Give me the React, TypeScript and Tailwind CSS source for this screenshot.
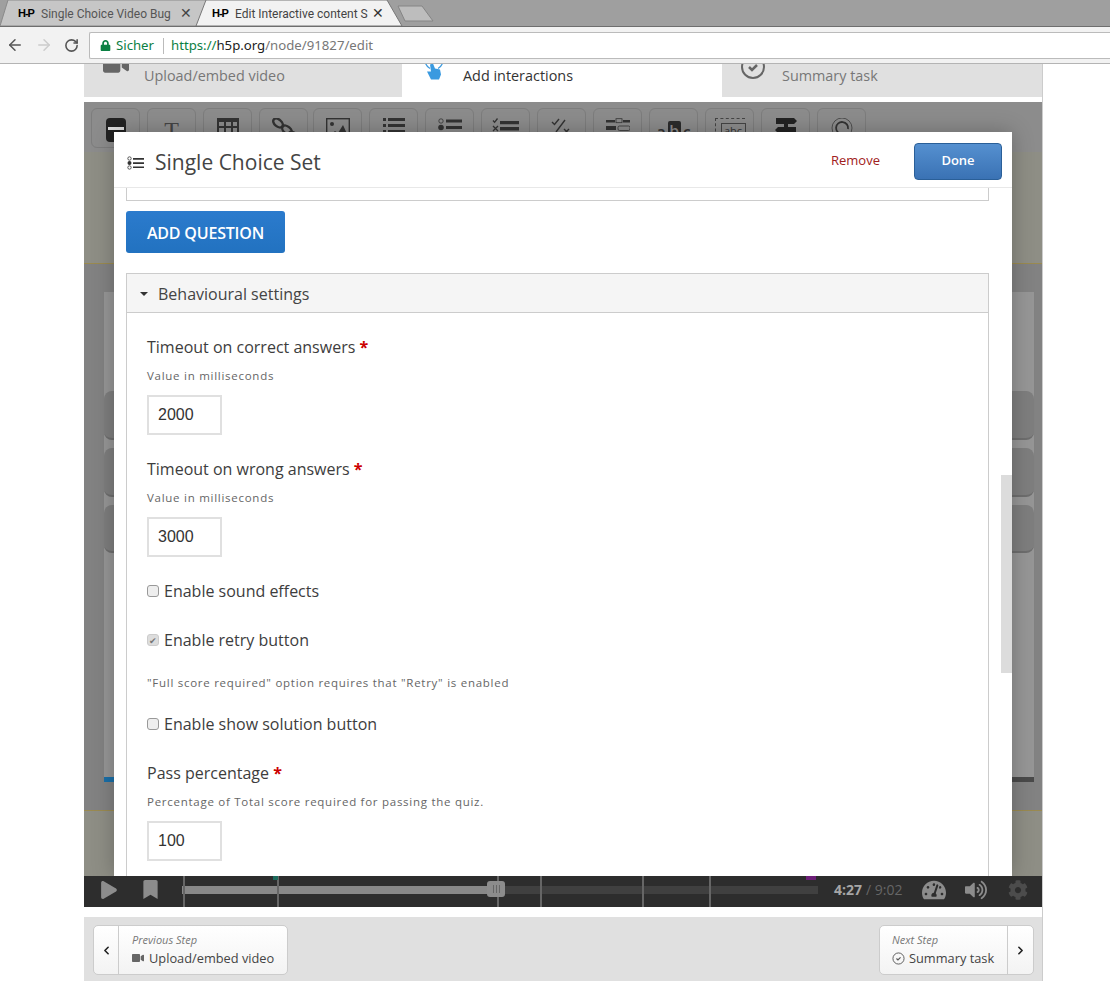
import { ArrowLeft, ArrowRight, RotateCw, ChevronLeft, ChevronRight } from 'lucide-react';
import { FaBookmark, FaCog, FaLock, FaPlay, FaTachometerAlt, FaVideo, FaVolumeUp } from 'react-icons/fa';

const Logo = () => (
  <span className="w-[17px] text-[11px] font-black tracking-[-1px] text-black font-['Liberation_Sans',sans-serif]">H-P</span>
);

function BrowserChrome() {
  return (
    <div className="shrink-0 font-['Noto_Sans',sans-serif]">
      {/* tabs */}
      <div className="relative flex h-[27px] items-center border-b border-[#6e6e6e] bg-[#9f9f9f] pt-[1px] font-['Roboto',sans-serif] text-[12px]">
        <svg className="absolute inset-0" width="440" height="26" viewBox="0 0 440 26">
          <path d="M0 26 L8 0 H208 L198 26 Z" fill="#c6c6c6" stroke="#8a8a8a" />
          <path d="M196 26 L206 0 H387 L402 26 Z" fill="#f2f2f2" stroke="#777" />
          <path d="M398 6 H422 L433 21 H405 Z" fill="#bdbdbd" stroke="#858585" />
        </svg>
        <div className="relative flex items-center pl-[18px]">
          <Logo />
          <span className="ml-[6px] w-[133px] whitespace-nowrap text-[#555]">Single Choice Video Bug</span>
          <span className="ml-[6px] w-[12px] text-center text-[14px] text-[#444]">✕</span>
          <span className="ml-[20px] flex"><Logo /></span>
          <span className="ml-[6px] w-[137px] whitespace-nowrap text-[#444]">Edit Interactive content S</span>
          <span className="w-[12px] text-center text-[14px] text-[#333]">✕</span>
        </div>
      </div>
      {/* toolbar */}
      <div className="flex h-[37px] items-center border-b border-[#b4b4b4] bg-[#f2f2f2]">
        <div className="flex w-[89px] items-center gap-[11px] pl-[6px]">
          <ArrowLeft size={18} strokeWidth={2} className="text-[#555]" />
          <ArrowRight size={18} strokeWidth={2} className="text-[#ccc]" />
          <RotateCw size={15} strokeWidth={2.5} className="text-[#555]" />
        </div>
        <div className="flex h-[27px] flex-1 items-center rounded-l-[2px] border border-r-0 border-[#bbb] bg-white pl-[10px] pt-[1px] text-[13.2px]">
          <FaLock size={11} className="text-[#0b8043]" />
          <span className="ml-[5px] text-[#0b8043]">Sicher</span>
          <span className="ml-[9px] h-[16px] w-px bg-[#bbb]" />
          <span className="ml-[7px] text-[#0b8043]">https://</span>
          <span className="text-[#222]">h5p.org</span>
          <span className="text-[#777]">/node/91827/edit</span>
        </div>
      </div>
    </div>
  );
}

const toolIcons = [
  <svg key="0" viewBox="0 0 24 24" className="h-[24px] w-[24px]"><rect x="2" y="0" width="20" height="24" rx="4" fill="#222" /><rect x="4" y="9" width="16" height="3" fill="#ddd" /></svg>,
  <span key="1" className="font-['Liberation_Serif',serif] text-[24px] leading-none text-[#444]">T</span>,
  <svg key="2" viewBox="0 0 24 24" className="h-[24px] w-[24px]" fill="#333"><path d="M1 0h22v20H1z" /><path fill="#8c8c8c" d="M3 4h5v4H3zM10 4h5v4h-5zM17 4h4v4h-4zM3 10h5v4H3zM10 10h5v4h-5zM17 10h4v4h-4z" /></svg>,
  <svg key="3" viewBox="0 0 24 24" className="h-[24px] w-[24px]" fill="none" stroke="#333" strokeWidth="2.4"><ellipse cx="6" cy="5" rx="5.5" ry="3.5" transform="rotate(40 6 5)" /><ellipse cx="15" cy="12" rx="5.5" ry="3.5" transform="rotate(40 15 12)" /><ellipse cx="21" cy="18" rx="5" ry="3.5" transform="rotate(40 21 18)" /></svg>,
  <svg key="4" viewBox="0 0 24 24" className="h-[24px] w-[24px]"><rect x="0.7" y="0.7" width="22.6" height="20" fill="none" stroke="#333" strokeWidth="1.4" /><circle cx="6" cy="6" r="2" fill="#333" /><path d="M3 18l6-5 3 2 5-8 5 11z" fill="#333" /></svg>,
  <svg key="5" viewBox="0 0 24 24" className="h-[24px] w-[24px]" fill="#333"><path d="M1 0h3v3H1zM6 0h17v3H6zM1 6h3v3H1zM6 6h17v3H6zM1 12h3v3H1zM6 12h17v3H6z" /></svg>,
  <svg key="6" viewBox="0 0 24 24" className="h-[24px] w-[24px]" fill="#333"><circle cx="3" cy="3" r="2.2" fill="none" stroke="#333" strokeWidth="0.8" /><path d="M8 1.5h16v3H8zM8 8h16v3H8z" /><circle cx="3" cy="9.5" r="2.8" /></svg>,
  <svg key="7" viewBox="0 0 27 24" className="h-[24px] w-[27px]" fill="#333"><path d="M8 3h19v3.2H8zM8 9h19v3.5H8z" /><path d="M1 2.5l1.6 1.8L5.5 0.5M1 8l5 5M6 8l-5 5" fill="none" stroke="#333" strokeWidth="1.3" /></svg>,
  <svg key="8" viewBox="0 0 24 24" className="h-[24px] w-[24px]" fill="none" stroke="#333" strokeWidth="1.4"><path d="M2 4l2.5 2.5L9 1M15 2L6 14M14 11l5 5M19 11l-5 5" /></svg>,
  <svg key="9" viewBox="0 0 24 24" className="h-[24px] w-[24px]"><path d="M0 2h9v2.6H0zM17 2h7v2.6h-7zM0 8h10v4H0z" fill="#333" /><rect x="10" y="0.7" width="6" height="4" fill="none" stroke="#333" strokeWidth="0.8" /><rect x="12" y="8" width="12" height="4.5" rx="1.5" fill="none" stroke="#333" strokeWidth="0.8" /></svg>,
  <div key="10" className="flex h-[24px] items-start pt-[3px] font-['Open_Sans',sans-serif] text-[16px] font-semibold leading-[20px] text-[#333]">
    <span className="mt-[1px]">a</span>
    <span className="mx-[2px] w-[13px] rounded-[2px] bg-[#2b2b2b] text-center text-[#8c8c8c]">b</span>
    <span className="mt-[1px]">c</span>
  </div>,
  <div key="11" className="relative h-[24px] w-[30px] border-l border-t border-dashed border-[#444]">
    <div className="absolute left-[5px] top-[4px] h-[20px] w-[25px] border border-[#444] text-center font-['Open_Sans',sans-serif] text-[11px] leading-[14px] text-[#333]">abc</div>
  </div>,
  <svg key="12" viewBox="0 0 24 24" className="h-[24px] w-[24px]" fill="#222"><path d="M10 0h4v22h-4z" /><path d="M2 0h18l3 3-3 3H2zM22 9H4l-3 3 3 3h18z" /></svg>,
  <svg key="13" viewBox="0 0 24 24" className="h-[24px] w-[24px]" fill="none" stroke="#333"><circle cx="12" cy="10" r="10" strokeWidth="0.7" /><path d="M12 16a6 6 0 1 1 6-5" strokeWidth="1.8" /></svg>,
];

function Toolbar() {
  return (
    <div className="flex h-[50px] shrink-0 gap-[7px] bg-[#8c8c8c] pl-[7px] pt-[6px]">
      {toolIcons.map((icon, i) => (
        <div
          key={i}
          className={`flex h-[40px] w-[49px] justify-center rounded-[6px] border border-[#7d7d7d] pt-[9px] ${i === 4 ? 'ml-[-2px]' : ''}`}
        >
          {icon}
        </div>
      ))}
    </div>
  );
}

function Required({ children }: { children: string }) {
  return (
    <div className="text-[16px] font-medium leading-[22px] text-[#3d3d3d]">
      {children} <span className="font-bold text-[#c00]">*</span>
    </div>
  );
}

function Hint({ children }: { children: string }) {
  return <div className="text-[11.5px] leading-[16px] tracking-[0.73px] text-[#666]">{children}</div>;
}

function NumberField({ label, hint, value }: { label: string; hint: string; value: string }) {
  return (
    <div>
      <Required>{label}</Required>
      <div className="mt-[10px]"><Hint>{hint}</Hint></div>
      <div className="mt-[11px] flex h-[40px] w-[75px] items-center border-2 border-[#e0e0e0] bg-white pl-[9px] font-['Liberation_Sans',sans-serif] text-[16px] text-[#333]">
        {value}
      </div>
    </div>
  );
}

function Check({ label, checked }: { label: string; checked?: boolean }) {
  return (
    <div className="flex h-[22px] items-center gap-[5px]">
      <span className={`flex h-[12px] w-[12px] items-center justify-center rounded-[3px] border text-[9px] leading-none text-[#777] ${checked ? 'border-[#ccc] bg-[#ddd]' : 'border-[#999] bg-[#eee]'}`}>
        {checked ? '✔' : ''}
      </span>
      <span className="text-[16px] font-medium text-[#3d3d3d]">{label}</span>
    </div>
  );
}

function Modal() {
  return (
    <div className="absolute left-[30px] top-[30px] flex h-[744px] w-[898px] flex-col overflow-hidden bg-white shadow-[0_0_20px_rgba(0,0,0,0.25)]">
      <div className="flex h-[56px] shrink-0 items-center border-b border-[#e8e8e8] pl-[13px] pr-[10px] pt-[3px]">
        <svg viewBox="0 0 18 14" className="mt-[3px] h-[14px] w-[18px]" fill="#333">
          <circle cx="2.5" cy="2.5" r="1.7" fill="none" stroke="#333" strokeWidth="0.8" />
          <circle cx="2.5" cy="7" r="2" />
          <circle cx="2.5" cy="11.5" r="1.7" fill="none" stroke="#333" strokeWidth="0.8" />
          <path d="M6 2h11v1.7H6zM6 6.2h11v1.7H6zM6 10.4h11v1.7H6z" />
        </svg>
        <span className="ml-[10px] mt-[3px] text-[21px] text-[#444]">Single Choice Set</span>
        <span className="ml-auto mr-[34px] text-[13px] text-[#a02020]">Remove</span>
        <span className="flex h-[37px] w-[88px] items-center justify-center rounded-[4px] border border-[#2a5f98] bg-gradient-to-b from-[#5590d0] to-[#3a72b4] text-[13px] font-semibold text-white">
          Done
        </span>
      </div>
      <div className="relative flex-1 overflow-hidden pl-[12px] pr-[23px]">
        <div className="h-[13px] border-x border-b border-[#ccc]" />
        <div className="mt-[10px] flex h-[42px] w-[159px] items-center justify-center rounded-[3px] bg-gradient-to-b from-[#2b7bcd] to-[#2272c0] pt-[2px] text-[16px] font-semibold tracking-[-0.2px] text-white">
          ADD QUESTION
        </div>
        <div className="mt-[20px] border-x border-t border-[#ccc]">
          <div className="flex h-[39px] items-center border-b border-[#ccc] bg-[#f5f5f5] pl-[13px] pt-[2px] text-[16px] text-[#444]">
            <span className="h-0 w-0 border-x-[4px] border-t-[4px] border-x-transparent border-t-[#333]" />
            <span className="ml-[10px]">Behavioural settings</span>
          </div>
          <div className="pl-[20px] pt-[23px]">
            <NumberField label="Timeout on correct answers" hint="Value in milliseconds" value="2000" />
            <div className="mt-[23px]">
              <NumberField label="Timeout on wrong answers" hint="Value in milliseconds" value="3000" />
            </div>
            <div className="mt-[23px]"><Check label="Enable sound effects" /></div>
            <div className="mt-[27px]"><Check label="Enable retry button" checked /></div>
            <div className="mt-[24px]"><Hint>"Full score required" option requires that "Retry" is enabled</Hint></div>
            <div className="mt-[22px]"><Check label="Enable show solution button" /></div>
            <div className="mt-[27px]">
              <NumberField label="Pass percentage" hint="Percentage of Total score required for passing the quiz." value="100" />
            </div>
            <div className="h-[40px]" />
          </div>
        </div>
        <div className="absolute right-0 top-[287px] h-[198px] w-[11px] bg-[#dcdcdc]" />
      </div>
    </div>
  );
}

function Stage() {
  return (
    <div className="relative flex h-[774px] shrink-0 flex-col">
      <Toolbar />
      <div className="h-[112px] shrink-0 border-b border-[#9a8a50] bg-[#8e8e85]" />
      <div className="h-[28px] shrink-0 bg-[#828282]" />
      <div className="flex h-[490px] shrink-0 bg-[#828282] pl-[20px] pr-[8px]">
        <div className="flex flex-1 flex-col bg-[#969696] pt-[99px]">
          <div className="h-[49px] shrink-0 rounded-[8px] border-b-2 border-[#6e6e6e] bg-[#7e7e7e]" />
          <div className="mt-[8px] h-[49px] shrink-0 rounded-[8px] border-b-2 border-[#6e6e6e] bg-[#7e7e7e]" />
          <div className="mt-[8px] h-[48px] shrink-0 rounded-[8px] border-b-2 border-[#6e6e6e] bg-[#7e7e7e]" />
          <div className="mt-auto flex h-[5px] shrink-0">
            <div className="w-[30px] bg-[#1a6fa8]" />
            <div className="flex-1 bg-[#4a4a4a]" />
          </div>
        </div>
      </div>
      <div className="h-[29px] shrink-0 border-b border-[#9a8a50] bg-[#828282]" />
      <div className="flex-1 bg-[#8e8e85]" />
      <Modal />
    </div>
  );
}

const ticks = [99, 193, 413, 456, 558, 625];

function VideoBar() {
  return (
    <div className="relative flex h-[31px] shrink-0 items-center bg-[#2d2d2d] pb-[4px]">
      <FaPlay size={18} className="ml-[16px] text-[#8c8c8c]" />
      <FaBookmark size={19} className="ml-[23px] text-[#8c8c8c]" />
      <div className="relative ml-[22px] flex h-[8px] w-[636px]">
        <div className="w-[313px] bg-[#888]" />
        <div className="flex-1 bg-[#404040]" />
      </div>
      {ticks.map(x => (
        <span key={x} className="absolute top-0 h-full w-[2px] bg-[#666]" style={{ left: x }} />
      ))}
      <span className="absolute left-[189px] top-0 h-[4px] w-[5px] bg-[#1d6a5c]" />
      <span className="absolute left-[722px] top-0 h-[4px] w-[10px] bg-[#6d1f78]" />
      <div className="absolute left-[403px] top-[5px] flex h-[16px] w-[18px] items-center justify-center gap-[2px] rounded-[3px] bg-[#8c8c8c]">
        <span className="h-[8px] w-px bg-[#666]" />
        <span className="h-[8px] w-px bg-[#666]" />
        <span className="h-[8px] w-px bg-[#666]" />
      </div>
      <span className="ml-[16px] text-[14px] font-bold text-[#a6a6a6]">4:27</span>
      <span className="ml-[4px] text-[14px] text-[#666]">/ 9:02</span>
      <FaTachometerAlt size={24} className="ml-[20px] text-[#8c8c8c]" />
      <FaVolumeUp size={22} className="ml-[19px] text-[#8c8c8c]" />
      <FaCog size={20} className="ml-[21px] text-[#4c4c4c]" />
    </div>
  );
}

function StepFooter() {
  return (
    <div className="flex h-[64px] shrink-0 items-start justify-between bg-[#e0e0e0] pl-[9px] pr-[8px] pt-[8px]">
      <div className="flex h-[50px] w-[195px] rounded-[5px] border border-[#ccc] bg-gradient-to-b from-white to-[#f3f3f3]">
        <div className="flex w-[25px] items-center justify-center border-r border-[#ccc]">
          <ChevronLeft size={13} strokeWidth={3} className="text-[#222]" />
        </div>
        <div className="pl-[13px] pt-[6px]">
          <div className="text-[11px] italic leading-[16px] text-[#777]">Previous Step</div>
          <div className="flex items-center gap-[5px] text-[12.8px] leading-[20px] text-[#444]">
            <FaVideo size={12} className="text-[#666]" />
            Upload/embed video
          </div>
        </div>
      </div>
      <div className="flex h-[50px] w-[155px] rounded-[5px] border border-[#ccc] bg-gradient-to-b from-white to-[#f3f3f3]">
        <div className="flex-1 pl-[12px] pt-[6px]">
          <div className="text-[11px] italic leading-[16px] text-[#777]">Next Step</div>
          <div className="flex items-center gap-[4px] text-[12.8px] leading-[20px] text-[#444]">
            <svg viewBox="0 0 14 14" className="h-[13px] w-[13px]" fill="none" stroke="#555">
              <circle cx="7" cy="7" r="6" />
              <path d="M4.8 7l1.6 1.6L9.2 5.8" strokeWidth="1.3" />
            </svg>
            Summary task
          </div>
        </div>
        <div className="flex w-[26px] items-center justify-center border-l border-[#ccc]">
          <ChevronRight size={13} strokeWidth={3} className="text-[#222]" />
        </div>
      </div>
    </div>
  );
}

function StepTabs() {
  return (
    <div className="flex h-[33px] shrink-0 text-[14.4px]">
      <div className="flex w-[318px] overflow-hidden bg-[#e0e0e0] text-[#777]">
        <FaVideo size={26} className="ml-[19px] mt-[-13px] text-[#666]" />
        <span className="ml-[15px] mt-[1px]">Upload/embed video</span>
      </div>
      <div className="flex w-[320px] overflow-hidden bg-white text-[#333]">
        <svg viewBox="0 0 20 24" className="ml-[22px] mt-[-8px] h-[25px] w-[20px]" fill="none" stroke="#3a9ae0" strokeWidth="1.3">
          <path d="M1 5c1 4 3 6 5 7M19 5c-1 4-3 6-5 7" />
          <path d="M6 8l3-1 2 5 5 1 1 5-2 5H7l-4-8 4 0z" fill="#3a9ae0" stroke="none" />
        </svg>
        <span className="ml-[19px] mt-[1px]">Add interactions</span>
      </div>
      <div className="flex flex-1 overflow-hidden bg-[#e0e0e0] text-[#777]">
        <svg viewBox="0 0 24 24" className="ml-[19px] mt-[-9px] h-[24px] w-[24px]" fill="none" stroke="#666" strokeWidth="2">
          <circle cx="12" cy="12" r="11" />
          <path d="M8 12l3 3 5-5" strokeWidth="2.5" />
        </svg>
        <span className="ml-[17px] mt-[1px]">Summary task</span>
      </div>
    </div>
  );
}

export default function App() {
  return (
    <div className="flex h-[981px] w-[1110px] flex-col overflow-hidden bg-white">
      <BrowserChrome />
      <div className="ml-[84px] flex w-[959px] flex-1 flex-col overflow-hidden border-r border-[#ccc] font-['Open_Sans',sans-serif]">
        <StepTabs />
        <div className="h-[5px] shrink-0 bg-white" />
        <Stage />
        <VideoBar />
        <div className="h-[10px] shrink-0 bg-white" />
        <StepFooter />
      </div>
    </div>
  );
}
